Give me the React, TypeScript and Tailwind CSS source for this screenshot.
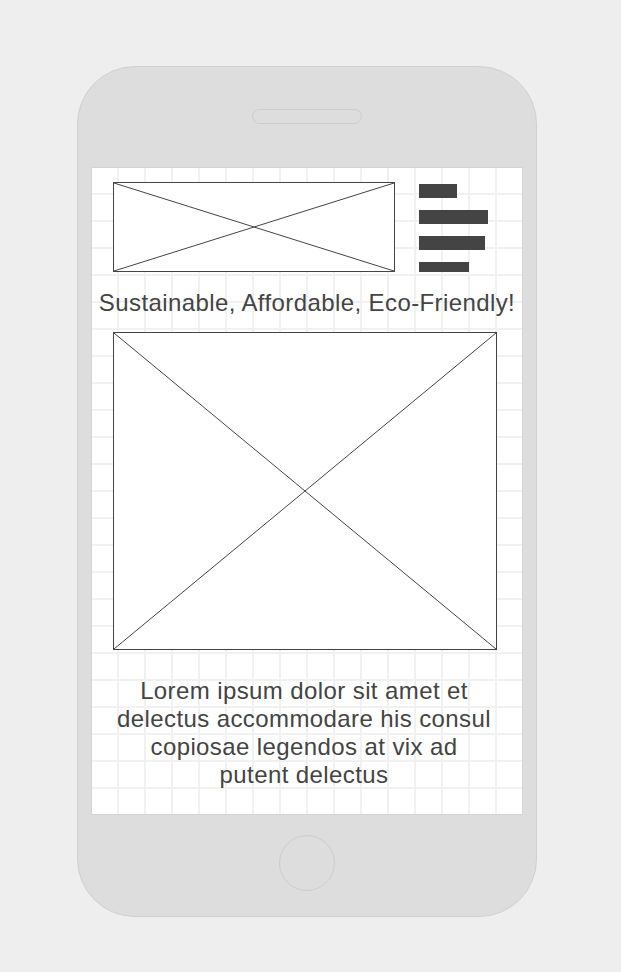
import React from "react";

function Placeholder({ w, h }: { w: number; h: number }) {
  return (
    <div className="relative shrink-0 border border-[#444] bg-white" style={{ width: w, height: h }}>
      <svg className="absolute inset-0 h-full w-full" viewBox={`0 0 ${w - 2} ${h - 2}`} preserveAspectRatio="none">
        <line x1="0" y1="0" x2={w - 2} y2={h - 2} stroke="#444" strokeWidth="1" />
        <line x1="0" y1={h - 2} x2={w - 2} y2="0" stroke="#444" strokeWidth="1" />
      </svg>
    </div>
  );
}

export default function App() {
  return (
    <div className="min-h-[972px] w-full bg-[#eeeeee] pl-[77px] pt-[66px] font-['Liberation_Sans',Arial,sans-serif]">
      <div className="flex h-[851px] w-[460px] flex-col items-center rounded-[58px] border border-[#d0d0d0] bg-[#dddddd]">
        <div className="mt-[42px] h-[15px] w-[110px] rounded-full border border-[#cccccc]" />
        <div className="mt-[43px] h-[648px] w-[432px] border border-[#d4d4d4] bg-white bg-[image:linear-gradient(to_right,#f1f1f1_2px,transparent_2px),linear-gradient(to_bottom,#f1f1f1_2px,transparent_2px)] bg-[size:27px_27px] bg-[position:-2px_-2px]">
          <div className="flex pl-[21px] pt-[14px]">
            <Placeholder w={282} h={90} />
            <div className="ml-[24px] mt-[2px] flex flex-col gap-[12px]">
              <div className="h-[14px] w-[38px] bg-[#444]" />
              <div className="h-[14px] w-[69px] bg-[#444]" />
              <div className="h-[14px] w-[66px] bg-[#444]" />
              <div className="h-[10px] w-[50px] bg-[#444]" />
            </div>
          </div>
          <div className="mt-[17px] text-center text-[24px] leading-[28px] tracking-[0.4px] text-[#444]">
            Sustainable, Affordable, Eco-Friendly!
          </div>
          <div className="mt-[15px] pl-[21px]">
            <Placeholder w={384} h={318} />
          </div>
          <div className="mt-[27px] pr-[6px] text-center text-[24px] leading-[28px] tracking-[0.4px] text-[#444]">
            Lorem ipsum dolor sit amet et
            <br />
            delectus accommodare his consul
            <br />
            copiosae legendos at vix ad
            <br />
            putent delectus
          </div>
        </div>
        <div className="mt-[20px] h-[56px] w-[56px] rounded-full border border-[#cccccc]" />
      </div>
    </div>
  );
}
